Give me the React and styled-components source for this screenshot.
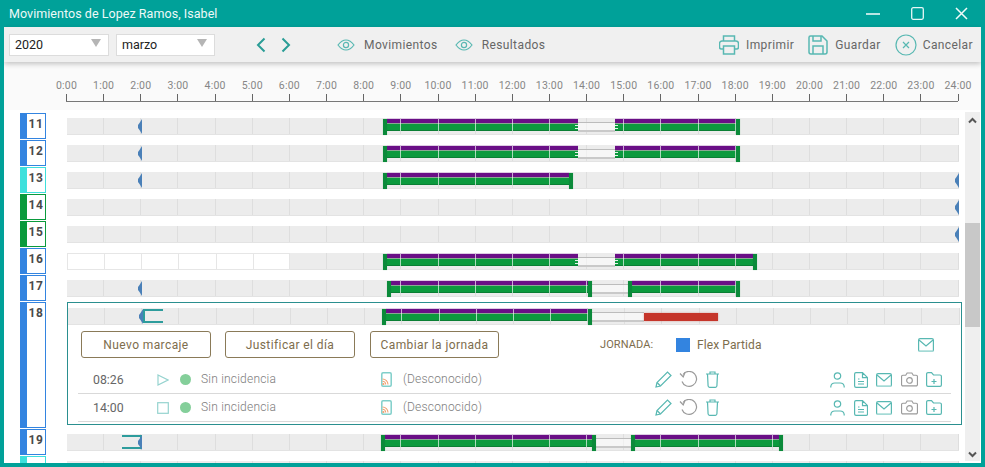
import React from "react";
import styled, { createGlobalStyle } from "styled-components";

const HOUR = 37.15;
const TEAL = "#00a199";
const ICON = "#58b8b2";

const GlobalStyle = createGlobalStyle`
  html, body {
    margin: 0;
    padding: 0;
    background: #fff;
    overflow: hidden;
  }
`;

const Win = styled.div`
  width: 985px;
  height: 467px;
  box-sizing: border-box;
  border: 4px solid ${TEAL};
  border-top: 0;
  display: flex;
  flex-flow: column;
  overflow: hidden;
  font-family: "Roboto", "Liberation Sans", sans-serif;
  background: #fff;
`;

const TitleBar = styled.div`
  height: 27px;
  flex: none;
  background: ${TEAL};
  margin: 0 -4px;
  padding: 0 17px 0 9px;
  display: flex;
  align-items: center;
  justify-content: space-between;
  color: #eef9f8;
  font-size: 12.5px;
  letter-spacing: 0.05px;
`;

const WinButtons = styled.div`
  display: flex;
  gap: 31px;
  align-items: center;
`;

const Toolbar = styled.div`
  height: 35px;
  flex: none;
  background: #f0f0f0;
  box-shadow: 0 2px 5px rgba(0, 0, 0, 0.22);
  display: flex;
  align-items: center;
  padding: 0 8px 0 5px;
  position: relative;
  z-index: 2;
  color: #666;
  font-size: 12px;
  letter-spacing: 0.4px;
`;

const Select = styled.div`
  width: ${(p) => p.$width}px;
  height: 22px;
  box-sizing: border-box;
  background: #fff;
  border: 1px solid #dcdcdc;
  margin-right: 7px;
  padding: 0 7px 0 5px;
  display: flex;
  align-items: center;
  justify-content: space-between;
  color: #222;
  font-size: 12.5px;
  letter-spacing: 0;
`;

const Caret = styled.span`
  width: 0;
  height: 0;
  border-left: 5px solid transparent;
  border-right: 5px solid transparent;
  border-top: 8px solid #b5b5b5;
  margin-bottom: 4px;
`;

const Pager = styled.div`
  display: flex;
  gap: 15px;
  margin: 0 46px 0 34px;
`;

const ToolItem = styled.div`
  display: flex;
  align-items: center;
  gap: ${(p) => p.$gap || 9}px;
  margin-right: ${(p) => p.$after || 0}px;
  white-space: nowrap;
`;

const Spacer = styled.div`
  flex: 1;
`;

const Axis = styled.div`
  height: 48px;
  flex: none;
  background: #fafafa;
  padding-left: 62px;
`;

const AxisLine = styled.div`
  position: relative;
  width: ${HOUR * 24}px;
  height: 39px;
  border-bottom: 1px solid #777;
`;

const Tick = styled.div`
  position: absolute;
  left: ${(p) => p.$h * HOUR}px;
  bottom: 0;
  width: 1px;
  height: 7px;
  background: #666;
`;

const TickLabel = styled.div`
  position: absolute;
  left: ${(p) => p.$h * HOUR - 20}px;
  top: 17px;
  width: 41px;
  text-align: center;
  font-size: 10.5px;
  letter-spacing: 0.2px;
  color: #868686;
`;

const Body = styled.div`
  flex: 1;
  min-height: 0;
  display: flex;
  overflow: hidden;
`;

const List = styled.div`
  flex: 1;
  min-width: 0;
  padding: 3px 0 0 16px;
  overflow: hidden;
  display: flex;
  flex-flow: column;
  gap: 1px;
`;

const Scrollbar = styled.div`
  width: 15px;
  flex: none;
  margin: 2px 1px 2px 0;
  background: #efefef;
  display: flex;
  flex-flow: column;
  align-items: center;
`;

const ScrollArrow = styled.svg`
  flex: none;
  margin: ${(p) => p.$margin};
`;

const Thumb = styled.div`
  width: 100%;
  height: 104px;
  flex: none;
  margin-top: 99px;
  background: #c8c8c8;
`;

const DayRow = styled.div`
  display: flex;
  gap: 21px;
  flex: none;
  min-height: 26px;
`;

const DayBox = styled.div`
  width: 26px;
  flex: none;
  box-sizing: border-box;
  border: 1px solid ${(p) => p.$color};
  border-left: 7px solid ${(p) => p.$color};
  background: #fff;
  font-size: 12px;
  font-weight: 700;
  color: #4a4a4a;
  text-align: center;
  letter-spacing: 0.6px;
  padding-top: 3px;
  line-height: 14px;
`;

const TrackWrap = styled.div`
  padding-top: 5px;
  flex: none;
`;

const Track = styled.div`
  position: relative;
  width: ${HOUR * 24}px;
  height: 16px;
  background-color: #ececec;
  background-image: repeating-linear-gradient(
    to right,
    transparent 0,
    transparent ${HOUR - 1}px,
    #dedede ${HOUR - 1}px,
    #dedede ${HOUR}px
  );
  border-bottom: 1px solid #e3e3e3;
`;

const Bar = styled.div`
  position: absolute;
  left: ${(p) => p.$from}px;
  width: ${(p) => p.$to - p.$from}px;
  top: ${(p) => p.$top}px;
  height: ${(p) => p.$height}px;
  background: ${(p) => p.$color};
  box-shadow: ${(p) => p.$glow || "none"};
`;

const Rest = styled(Bar)`
  box-sizing: border-box;
  background: rgba(255, 255, 255, 0.5);
  border-top: 1px solid #bcbcbc;
  border-bottom: 2px solid #c9c9c9;
`;

const GapEdge = styled.div`
  position: absolute;
  left: ${(p) => p.$at}px;
  top: 6px;
  width: 3px;
  height: 7px;
  z-index: 2;
  background: linear-gradient(
    to bottom,
    transparent 0 1px,
    #e6f3ea 1px 2px,
    transparent 2px 4px,
    #e6f3ea 4px 5px,
    transparent 5px
  );
`;

const Handle = styled.div`
  position: absolute;
  left: ${(p) => p.$at}px;
  top: 1px;
  width: 4px;
  height: 16px;
  background: #0b8a3a;
  box-shadow: 0 0 1px rgba(11, 138, 58, 0.5);
  z-index: 2;
`;

const HourLines = styled.div`
  position: absolute;
  left: 0;
  width: 100%;
  top: 1px;
  height: 12px;
  clip-path: inset(0 ${(p) => HOUR * 24 - p.$to}px 0 ${(p) => p.$from}px);
  background-image: repeating-linear-gradient(
    to right,
    transparent 0,
    transparent ${HOUR - 1}px,
    rgba(255, 255, 255, 0.65) ${HOUR - 1}px,
    rgba(255, 255, 255, 0.65) ${HOUR}px
  );
  z-index: 1;
`;

const WhiteCells = styled.div`
  position: absolute;
  left: 0;
  top: 0;
  bottom: -1px;
  width: ${HOUR * 6}px;
  box-sizing: border-box;
  border: 1px solid #e6e6e6;
  background-color: #fff;
  background-image: repeating-linear-gradient(
    to right,
    transparent 0,
    transparent ${HOUR - 1}px,
    #e6e6e6 ${HOUR - 1}px,
    #e6e6e6 ${HOUR}px
  );
`;

const Marker = styled.svg`
  position: absolute;
  left: ${(p) => p.$at}px;
  top: 1px;
  z-index: 3;
`;

const Bracket = styled.div`
  position: absolute;
  left: ${(p) => p.$at}px;
  top: 1px;
  width: ${(p) => p.$width}px;
  height: 14px;
  box-sizing: border-box;
  border-top: 2px solid #2d9c9c;
  border-bottom: 2px solid #2d9c9c;
  ${(p) => (p.$side === "left" ? "border-left" : "border-right")}: 2px solid #2d9c9c;
`;

const Detail = styled.div`
  width: 895px;
  flex: none;
  box-sizing: border-box;
  border: 1px solid #2a8f8f;
  height: 123px;
  margin-bottom: 3px;
  padding: 5px 0 0 0;
`;

const Actions = styled.div`
  display: flex;
  align-items: center;
  padding: 6px 27px 0 13px;
  height: 27px;
  color: #7d6d4d;
  font-size: 12px;
  letter-spacing: 0.4px;
`;

const ActionButton = styled.div`
  width: ${(p) => p.$width || 130}px;
  height: 27px;
  box-sizing: border-box;
  border: 1px solid #8a7a58;
  border-radius: 3px;
  margin-right: ${(p) => p.$after || 14}px;
  display: flex;
  align-items: center;
  justify-content: center;
  white-space: nowrap;
`;

const JornadaLabel = styled.span`
  margin-left: 87px;
  width: 76px;
  font-size: 11px;
  letter-spacing: 0.1px;
`;

const JornadaSwatch = styled.span`
  width: 14px;
  height: 14px;
  background: #3384e0;
  margin-right: 7px;
`;

const JornadaName = styled.span`
  letter-spacing: 0.1px;
`;

const Marks = styled.div`
  margin: 8px 10px 0 10px;
`;

const Mark = styled.div`
  display: flex;
  align-items: center;
  height: 27px;
  border-bottom: 1px solid #d9d9d9;
  color: #7c7c7c;
  font-size: 12px;
  font-weight: 300;
  letter-spacing: 0.2px;
`;

const MarkTime = styled.span`
  width: 79px;
  padding-left: 15px;
  box-sizing: border-box;
  color: #666;
  font-size: 12.3px;
  font-weight: 400;
  letter-spacing: 0;
`;

const KindIcon = styled.span`
  width: 23px;
  display: flex;
`;

const Dot = styled.span`
  width: 11px;
  height: 11px;
  border-radius: 50%;
  background: #84cf9a;
  margin-right: 10px;
`;

const Incidence = styled.span`
  width: 180px;
  margin-bottom: 2px;
`;

const Source = styled.span`
  display: flex;
  align-items: center;
  gap: 11px;
  width: 274px;
`;

const SourceName = styled.span`
  margin-bottom: 2px;
`;

const IconGroup = styled.span`
  display: flex;
  align-items: center;
  gap: ${(p) => p.$gap}px;
  margin-right: ${(p) => p.$after || 0}px;
`;

const stroke = { fill: "none", stroke: ICON, strokeWidth: 1.2 };
const gray = { fill: "none", stroke: "#9a9a9a", strokeWidth: 1.2 };

const Eye = () => (
  <svg width="18" height="12" viewBox="0 0 18 12">
    <path d="M1 6C4 2 6.500 1 9 1s5 1 8 5c-3 4-5.500 5-8 5s-5-1-8-5z" {...stroke} />
    <circle cx="9" cy="6" r="2.600" {...stroke} />
  </svg>
);

const Printer = () => (
  <svg width="20" height="20" viewBox="0 0 20 20">
    <path d="M4.500 6V1h11v5" {...stroke} strokeWidth="1.500" />
    <path d="M4.500 14H2.500a2 2 0 0 1-2-2V8.500a2.500 2.500 0 0 1 2.500-2.500h14a2.500 2.500 0 0 1 2.500 2.500V12a2 2 0 0 1-2 2h-2" {...stroke} strokeWidth="1.500" />
    <path d="M4.500 11h11v8h-11z" {...stroke} strokeWidth="1.500" />
  </svg>
);

const Floppy = () => (
  <svg width="20" height="20" viewBox="0 0 20 20">
    <path d="M2.500 1H14l5 5v11a2 2 0 0 1-2 2H3a2 2 0 0 1-2-2V2.500A1.500 1.500 0 0 1 2.500 1z" {...stroke} strokeWidth="1.500" />
    <path d="M5 1v5h8V1M5 19v-8h10v8" {...stroke} strokeWidth="1.500" />
  </svg>
);

const CancelIcon = () => (
  <svg width="22" height="22" viewBox="0 0 22 22">
    <circle cx="11" cy="11" r="10" {...stroke} />
    <path d="M8 8l6 6M14 8l-6 6" {...stroke} />
  </svg>
);

const Mail = () => (
  <svg width="16" height="14" viewBox="0 0 16 14">
    <rect x="0.600" y="0.600" width="14.800" height="12.800" rx="1.500" {...stroke} />
    <path d="M1 2l7 6 7-6" {...stroke} />
    <path d="M1 13.200h14" stroke="#a9dcd8" strokeWidth="1.500" />
  </svg>
);

const Play = () => (
  <svg width="12" height="12" viewBox="0 0 12 12">
    <path d="M1 1l10 5-10 5z" fill="none" stroke="#95d3cf" strokeWidth="1.200" />
  </svg>
);

const Square = () => (
  <svg width="12" height="12" viewBox="0 0 12 12">
    <rect x="0.700" y="0.700" width="10.600" height="10.600" fill="none" stroke="#95d3cf" strokeWidth="1.200" />
  </svg>
);

const Device = () => (
  <svg width="11" height="15" viewBox="0 0 11 15">
    <rect x="0.800" y="0.800" width="9.400" height="13.400" rx="1.200" fill="#fff" stroke="#80cfca" strokeWidth="1.500" />
    <path d="M1.500 7a5.500 5.500 0 0 1 5.500 5.500M1.500 9.300a3.200 3.200 0 0 1 3.200 3.200" fill="none" stroke="#f0a070" strokeWidth="1.100" />
    <circle cx="2.400" cy="12" r="1.100" fill="#f0a070" />
  </svg>
);

const Pencil = () => (
  <svg width="17" height="17" viewBox="0 0 17 17">
    <path d="M1 16l1-4.500L12.500 1 16 4.500 5.500 15z" {...stroke} />
    <path d="M2 11.500L5.500 15" {...stroke} />
  </svg>
);

const Undo = () => (
  <svg width="19" height="17" viewBox="0 0 19 17">
    <path d="M4 3.500A7.500 7.500 0 1 1 3 10.500" {...gray} />
    <path d="M1 2.500l3.200 3.500L6 1.500" {...gray} />
  </svg>
);

const Trash = () => (
  <svg width="15" height="17" viewBox="0 0 15 17">
    <path d="M1 3h13M5 3V1h5v2M2.500 3l.6 12a1.500 1.500 0 0 0 1.500 1.300h5.800a1.500 1.500 0 0 0 1.500-1.300l.6-12" {...stroke} />
  </svg>
);

const Person = () => (
  <svg width="15" height="16" viewBox="0 0 15 16">
    <circle cx="7.500" cy="4" r="3.200" {...stroke} />
    <path d="M0.800 15.500v-1a4 4 0 0 1 4-3.500h5.400a4 4 0 0 1 4 3.500v1" {...stroke} />
  </svg>
);

const Doc = () => (
  <svg width="14" height="16" viewBox="0 0 14 16">
    <path d="M2 .6h6.500l5 5V14a1.500 1.500 0 0 1-1.500 1.400H2A1.500 1.500 0 0 1 .6 14V2A1.500 1.500 0 0 1 2 .6zM8.500.6v5h5" {...stroke} />
    <path d="M4 7h1.500M4 9.500h6M4 12h6" {...stroke} />
  </svg>
);

const Camera = () => (
  <svg width="17" height="15" viewBox="0 0 18 15">
    <path d="M2 3h3l1.500-2.400h5L13 3h3a1.400 1.400 0 0 1 1.400 1.400v8.400A1.400 1.400 0 0 1 16 14.300H2A1.400 1.400 0 0 1 .6 12.800V4.400A1.400 1.400 0 0 1 2 3z" {...gray} />
    <circle cx="9" cy="8.500" r="3" {...gray} />
  </svg>
);

const FolderPlus = () => (
  <svg width="16" height="15" viewBox="0 0 16 15">
    <path d="M.6 2A1.400 1.400 0 0 1 2 .6h3.500L7.500 3H14a1.400 1.400 0 0 1 1.400 1.400V13a1.400 1.400 0 0 1-1.400 1.400H2A1.400 1.400 0 0 1 .6 13z" {...stroke} />
    <path d="M8 7v5M5.500 9.500h5" {...stroke} />
  </svg>
);

const hourLabels = Array.from({ length: 25 }, (_, h) => h);

const BLUE = "#3384e0";
const CYAN = "#3ee0dc";
const GREEN = "#0a9a3c";

// positions are px from the left edge of the track
const days = [
  { n: 11, color: BLUE, mark: [71], blocks: [[316, 511, 548, 669]] },
  { n: 12, color: BLUE, mark: [71], blocks: [[316, 511, 548, 669]] },
  { n: 13, color: CYAN, mark: [71, 888], blocks: [[316, 502]] },
  { n: 14, color: GREEN, mark: [888] },
  { n: 15, color: GREEN, mark: [888] },
  { n: 16, color: BLUE, white: true, blocks: [[316, 511, 548, 686]] },
  { n: 17, color: BLUE, mark: [71], blocks: [[320, 525, 561, 669]], closed: true },
];

const Shift = ({ from, to, top = 1 }) => (
  <>
    <Bar $from={from} $to={to} $top={top} $height={4} $color="#6a0f86" $glow="0 -1px 0 rgba(190,130,210,.3)" />
    <Bar
      $from={from}
      $to={to}
      $top={top + 4}
      $height={8}
      $color="#0c9a3e"
      $glow="inset 0 1px 0 #8aa793, inset 0 -1px 0 #0a7f34"
    />
    <HourLines $from={from} $to={to} />
  </>
);

const Blocks = ({ block, closed }) => {
  const [a, b, c, d] = block;
  if (c === undefined) {
    return (
      <>
        <Handle $at={a} />
        <Shift from={a + 4} to={b} />
        <Handle $at={b} />
      </>
    );
  }
  return (
    <>
      <Handle $at={a} />
      <Shift from={a + 4} to={closed ? b - 4 : b} />
      {closed && <Handle $at={b - 4} />}
      {!closed && <GapEdge $at={b - 3} />}
      <Rest $from={b} $to={c} $top={4} $height={10} />
      {closed && <Handle $at={c} />}
      {!closed && <GapEdge $at={c} />}
      <Shift from={closed ? c + 4 : c} to={d} />
      <Handle $at={d} />
    </>
  );
};

const MarkerIcon = ({ at }) => (
  <Marker $at={at} width="4" height="15" viewBox="0 0 4 15">
    <path d="M4 0v15L1.500 11 0 9V6L1.500 4z" fill="#4a80b8" />
  </Marker>
);

const DayLine = ({ day }) => (
  <DayRow>
    <DayBox $color={day.color}>{day.n}</DayBox>
    <TrackWrap>
      <Track>
        {day.white && <WhiteCells />}
        {day.bracket && <Bracket $at={55} $width={20} $side="right" />}
        {(day.mark || []).map((m) => (
          <MarkerIcon key={m} at={m} />
        ))}
        {(day.blocks || []).map((b) => (
          <Blocks key={b[0]} block={b} closed={day.closed} />
        ))}
      </Track>
    </TrackWrap>
  </DayRow>
);

const marks = [
  { time: "08:26", kind: <Play /> },
  { time: "14:00", kind: <Square /> },
];

const MarkRow = ({ time, kind }) => (
  <Mark>
    <MarkTime>{time}</MarkTime>
    <KindIcon>{kind}</KindIcon>
    <Dot />
    <Incidence>Sin incidencia</Incidence>
    <Source>
      <Device />
      <SourceName>(Desconocido)</SourceName>
    </Source>
    <IconGroup $gap={7} $after={110}>
      <Pencil />
      <Undo />
      <Trash />
    </IconGroup>
    <IconGroup $gap={8.5}>
      <Person />
      <Doc />
      <Mail />
      <Camera />
      <FolderPlus />
    </IconGroup>
  </Mark>
);

function App() {
  return (
    <Win>
      <GlobalStyle />
      <TitleBar>
        Movimientos de Lopez Ramos, Isabel
        <WinButtons>
          <svg width="14" height="14" viewBox="0 0 14 14">
            <path d="M0 7h14" stroke="#e8f7f6" strokeWidth="1.600" />
          </svg>
          <svg width="13" height="13" viewBox="0 0 13 13">
            <rect x="0.700" y="0.700" width="11.600" height="11.600" rx="1.500" fill="none" stroke="#e8f7f6" strokeWidth="1.300" />
          </svg>
          <svg width="13" height="13" viewBox="0 0 13 13">
            <path d="M1 1l11 11M12 1L1 12" stroke="#f2fbfa" strokeWidth="1.500" />
          </svg>
        </WinButtons>
      </TitleBar>
      <Toolbar>
        <Select $width={100}>
          2020
          <Caret />
        </Select>
        <Select $width={99}>
          marzo
          <Caret />
        </Select>
        <Pager>
          <svg width="10" height="16" viewBox="0 0 10 16">
            <path d="M8.500 1.500L2 8l6.500 6.500" fill="none" stroke="#2a9d96" strokeWidth="2" />
          </svg>
          <svg width="10" height="16" viewBox="0 0 10 16">
            <path d="M1.500 1.500L8 8l-6.500 6.500" fill="none" stroke="#2a9d96" strokeWidth="2" />
          </svg>
        </Pager>
        <ToolItem $after={17}>
          <Eye />
          Movimientos
        </ToolItem>
        <ToolItem>
          <Eye />
          Resultados
        </ToolItem>
        <Spacer />
        <ToolItem $gap={7} $after={14}>
          <Printer />
          Imprimir
        </ToolItem>
        <ToolItem $gap={7} $after={14}>
          <Floppy />
          Guardar
        </ToolItem>
        <ToolItem $gap={6}>
          <CancelIcon />
          Cancelar
        </ToolItem>
      </Toolbar>
      <Axis>
        <AxisLine>
          {hourLabels.map((h) => (
            <React.Fragment key={h}>
              <TickLabel $h={h}>{h}:00</TickLabel>
              <Tick $h={h} />
            </React.Fragment>
          ))}
        </AxisLine>
      </Axis>
      <Body>
        <List>
          {days.map((d) => (
            <DayLine key={d.n} day={d} />
          ))}
          <DayRow>
            <DayBox $color={BLUE}>18</DayBox>
            <Detail>
              <Track>
                <Bracket $at={75} $width={20} $side="left" />
                <MarkerIcon at={71} />
                <Handle $at={314} />
                <Shift from={318} to={520} />
                <Handle $at={520} />
                <Rest $from={524} $to={576} $top={4} $height={10} />
                <Bar $from={576} $to={650} $top={5} $height={8} $color="#c5352a" $glow="0 0 2px rgba(197,53,42,.5)" />
              </Track>
              <Actions>
                <ActionButton>Nuevo marcaje</ActionButton>
                <ActionButton $after={15}>Justificar el día</ActionButton>
                <ActionButton $width={129}>Cambiar la jornada</ActionButton>
                <JornadaLabel>JORNADA:</JornadaLabel>
                <JornadaSwatch />
                <JornadaName>Flex Partida</JornadaName>
                <Spacer />
                <Mail />
              </Actions>
              <Marks>
                {marks.map((m) => (
                  <MarkRow key={m.time} {...m} />
                ))}
              </Marks>
            </Detail>
          </DayRow>
          <DayLine
            day={{ n: 19, color: BLUE, mark: [71], closed: true, bracket: true, blocks: [[314, 529, 564, 712]] }}
          />
          <DayLine day={{ n: "", color: CYAN }} />
        </List>
        <Scrollbar>
          <ScrollArrow $margin="5px 0 0" width="9" height="7" viewBox="0 0 9 7">
            <path d="M1 5.500l3.500-3.500 3.500 3.500" fill="none" stroke="#555" strokeWidth="2" />
          </ScrollArrow>
          <Thumb />
          <Spacer />
          <ScrollArrow $margin="0 0 3px" width="9" height="7" viewBox="0 0 9 7">
            <path d="M1 1.500l3.500 3.500 3.500-3.500" fill="none" stroke="#555" strokeWidth="2" />
          </ScrollArrow>
        </Scrollbar>
      </Body>
    </Win>
  );
}

export default App;
